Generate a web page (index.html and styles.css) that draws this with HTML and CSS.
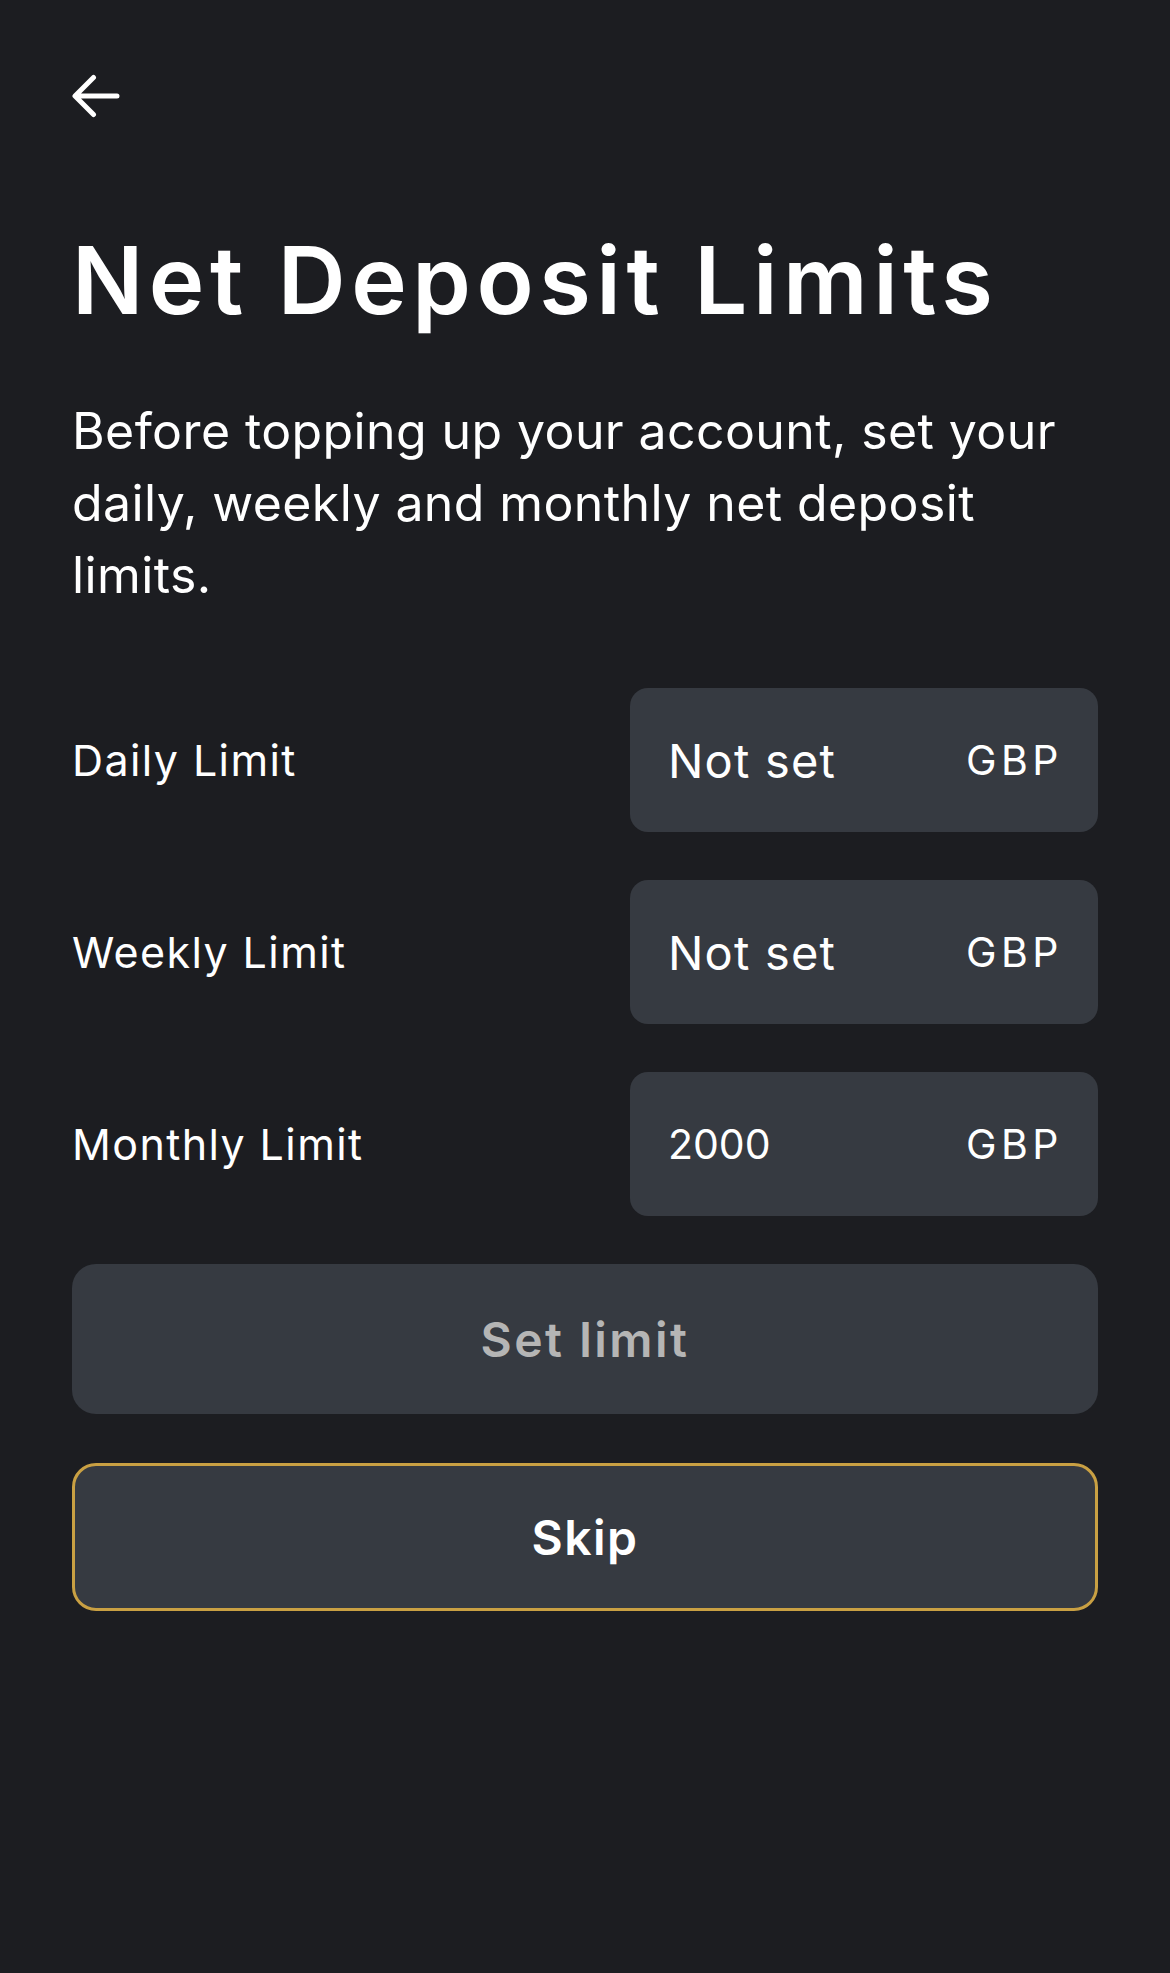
FILE: index.html
```html
<!DOCTYPE html>
<html lang="en">
<head>
<meta charset="utf-8">
<title>Net Deposit Limits</title>
<link rel="stylesheet" href="styles.css">
</head>
<body>
<main class="page">
  <button class="back" aria-label="Back">
    <svg width="48" height="48" viewBox="0 0 48 48" fill="none" stroke="#ffffff" stroke-width="5" stroke-linecap="round" stroke-linejoin="round">
      <path d="M45 24H3.5M21.5 5.5L3 24l18.5 18.5"/>
    </svg>
  </button>
  <h1 class="title">Net Deposit Limits</h1>
  <p class="intro">Before topping up your account, set your daily, weekly and monthly net deposit limits.</p>
  <div class="limits">
    <div class="row">
      <span class="label">Daily Limit</span>
      <div class="field"><span class="value value-empty">Not set</span><span class="currency">GBP</span></div>
    </div>
    <div class="row">
      <span class="label">Weekly Limit</span>
      <div class="field"><span class="value value-empty">Not set</span><span class="currency">GBP</span></div>
    </div>
    <div class="row">
      <span class="label">Monthly Limit</span>
      <div class="field"><span class="value">2000</span><span class="currency">GBP</span></div>
    </div>
  </div>
  <div class="actions">
    <button class="btn btn-disabled">Set limit</button>
    <button class="btn btn-outline">Skip</button>
  </div>
</main>
</body>
</html>
```

FILE: styles.css
```css
html, body {
  margin: 0;
  padding: 0;
  background: #1c1d21;
}
body {
  font-family: Inter, "Open Sans", sans-serif;
  color: #ffffff;
  min-height: 1973px;
}
.page {
  padding: 72px 72px 0 72px;
  display: flex;
  flex-direction: column;
}
.back {
  width: 48px;
  height: 48px;
  padding: 0;
  border: 0;
  background: none;
  display: block;
  cursor: pointer;
}
.back svg { display: block; }
.title {
  margin: 100px 0 0 0;
  font-size: 94px;
  line-height: 120px;
  font-weight: 600;
  letter-spacing: 5.5px;
}
.intro {
  margin: 55px 0 0 0;
  font-size: 50px;
  line-height: 72px;
  font-weight: 400;
  letter-spacing: 0.4px;
}
.limits {
  margin-top: 77px;
  display: flex;
  flex-direction: column;
  gap: 48px;
}
.row {
  display: flex;
  align-items: center;
  justify-content: space-between;
}
.label {
  font-size: 43px;
  font-weight: 400;
  letter-spacing: 1.4px;
}
.field {
  width: 468px;
  height: 144px;
  box-sizing: border-box;
  padding: 0 35px 0 38px;
  background: #363a41;
  border-radius: 18px;
  display: flex;
  align-items: center;
  justify-content: space-between;
}
.value {
  font-size: 41px;
}
.value-empty {
  font-size: 47px;
  letter-spacing: 1.2px;
}
.currency {
  font-size: 41px;
  letter-spacing: 4.5px;
}
.actions {
  margin-top: 48px;
  display: flex;
  flex-direction: column;
  gap: 49px;
}
.btn {
  height: 150px;
  width: 100%;
  border-radius: 24px;
  background: #363a41;
  border: 0;
  font-family: inherit;
  font-size: 48px;
  font-weight: 600;
  color: #ffffff;
  box-sizing: border-box;
  letter-spacing: 2.5px;
}
.btn-disabled {
  color: #b5b5b5;
}
.btn-outline {
  height: 148px;
  border: 3px solid #c9a043;
  letter-spacing: 1.5px;
}
```
